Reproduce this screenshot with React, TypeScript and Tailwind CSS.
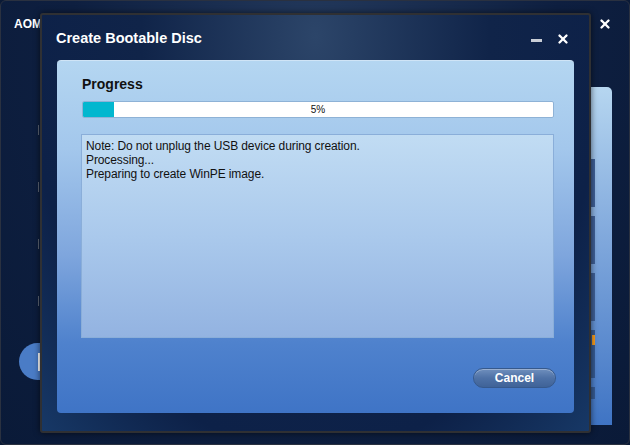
import { X } from "lucide-react";

const font = { fontFamily: '"Liberation Sans", Tahoma, Arial, sans-serif' };

function BackgroundWindow() {
  return (
    <div className="w-[630px] h-[445px] rounded-[6px] border border-[#2a3140] bg-[radial-gradient(ellipse_at_50%_10%,#23395c_0%,#0e1f40_55%,#0a1a38_100%)] flex flex-col overflow-hidden">
      {/* title bar */}
      <div className="h-[44px] flex items-center justify-between pl-[13px] pr-[17px] pt-[2px]">
        <span className="text-white font-bold text-[12px]">AOMEI</span>
        <X className="w-[14px] h-[14px] text-white" strokeWidth={4} />
      </div>

      <div className="flex-1 flex">
        {/* left menu */}
        <div className="w-[80px] flex flex-col pt-[80px] pl-[37px] gap-[47px]">
          <div className="w-[1px] h-[10px] bg-[#5b6474]" />
          <div className="w-[1px] h-[10px] bg-[#5b6474]" />
          <div className="w-[1px] h-[10px] bg-[#5b6474]" />
          <div className="w-[1px] h-[10px] bg-[#5b6474]" />
          <div className="-ml-[19px] -mt-[10px] w-[70px] h-[37px] rounded-full bg-[#4a7cc6] flex items-center pl-[19px]">
            <div className="w-[2px] h-[18px] bg-white" />
          </div>
        </div>
        <div className="flex-1" />
        {/* right panel */}
        <div className="w-[60px] mt-[42px] mb-[19px] mr-[17px] rounded-tr-[5px] bg-[linear-gradient(to_bottom,#b6d6f0,#80a8dc_45%,#3f74c4)] flex flex-col items-start pt-[72px] gap-[9px]">
          <div className="w-[43px] h-[48px] bg-[#3f5f96]" />
          <div className="w-[43px] h-[48px] bg-[#3f5f96]" />
          <div className="w-[43px] h-[48px] bg-[#3f5f96]" />
          <div className="w-[43px] h-[48px] bg-[#365a92] flex justify-end pt-[5px]">
            <div className="w-[3px] h-[10px] bg-[#f39a1e]" />
          </div>
          <div className="w-[43px] h-[12px] bg-[#365a92]" />
        </div>
      </div>
    </div>
  );
}

export default function App() {
  return (
    <div className="relative w-[630px] h-[445px] overflow-hidden bg-[#0b1a36]" style={font}>
      <BackgroundWindow />

      {/* dialog */}
      <div className="absolute left-[40px] top-[13px] w-[551px] h-[420px] border-2 border-[#2f3033] rounded-[3px] bg-[radial-gradient(ellipse_at_50%_5%,#2c4569_0%,#102449_45%,#0d2148_75%,#173866_100%)] flex flex-col shadow-[0_0_6px_rgba(0,0,0,0.6)]">
        <div className="h-[45px] flex items-center justify-between pl-[14px] pr-[19px]">
          <span className="text-white font-bold text-[14.5px] pt-[2px]">
            Create Bootable Disc
          </span>
          <div className="flex items-center gap-[14px] pt-[3px]">
            <div className="w-[11px] h-[3px] bg-[#c9ced6] mt-[2px]" />
            <X className="w-[14px] h-[14px] text-white" strokeWidth={4} />
          </div>
        </div>

        <div className="mx-[15px] mb-[18px] flex-1 rounded-[4px] bg-[linear-gradient(to_bottom,#b4d6f1_0%,#a3c7ec_25%,#7fa6dd_55%,#4f82cd_80%,#3f74c6_100%)] border-t border-[#cfe4f6] pl-[25px] pr-[20px] pt-[14px] flex flex-col">
          <div className="text-[#111] font-bold text-[14px] h-[19px] leading-[19px]">Progress</div>
          <div className="mt-[7px] h-[17px] rounded-[2px] border border-[#8eb2d6] bg-white relative flex items-center justify-center">
            <div className="absolute left-0 top-0 bottom-0 w-[31px] bg-[#02b7cf] rounded-l-[1px]" />
            <span className="relative text-[10px] text-[#111]">5%</span>
          </div>

          <div className="mt-[16px] -ml-[1px] h-[204px] border border-[#8aaed9] bg-[linear-gradient(to_bottom,#c1dcf3,#aac9ec_50%,#93b3e1)] px-[4px] pt-[4px] text-[12px] leading-[14px] tracking-[-0.1px] text-[#111]">
            <div>Note: Do not unplug the USB device during creation.</div>
            <div>Processing...</div>
            <div>Preparing to create WinPE image.</div>
          </div>

          <div className="flex-1 flex items-start justify-end pt-[30px] -mr-[2px]">
            <button className="w-[83px] h-[20px] rounded-full border border-[#36598c] bg-[linear-gradient(to_bottom,#6f8fbd,#4e71a6_50%,#3f6398)] text-white font-bold text-[12px] leading-[18px] shadow-[inset_0_1px_0_rgba(255,255,255,0.3)]">
              Cancel
            </button>
          </div>
        </div>
      </div>
    </div>
  );
}
